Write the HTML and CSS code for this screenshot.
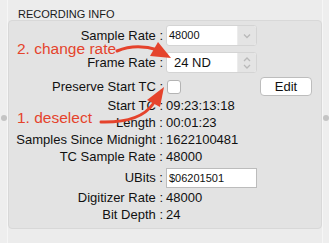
FILE: index.html
```html
<!DOCTYPE html>
<html lang="en">
<head>
  <meta charset="UTF-8">
  <title>Recording Info</title>
  <link rel="stylesheet" href="styles.css">
</head>
<body>

<div class="app">
  <div class="strip strip-left"><span class="grip"></span></div>

  <div class="main">
    <div class="group-title">RECORDING INFO</div>
    <div class="group">
      <div class="form">
        <div class="label row-select">Sample Rate :</div>
        <div class="value row-select">
          <div class="combo">
            <span class="combo-text small">48000</span>
            <span class="combo-btn">
              <svg width="10" height="8" viewBox="0 0 10 8"><path d="M2 2.5 L5 5.5 L8 2.5" fill="none" stroke="#b9b9b9" stroke-width="1.3"/></svg>
            </span>
          </div>
        </div>

        <div class="label row-select gap-top">Frame Rate :</div>
        <div class="value row-select gap-top">
          <div class="combo popup">
            <span class="combo-text">24 ND</span>
            <span class="combo-btn">
              <svg width="10" height="16" viewBox="0 0 10 16"><path d="M2 6 L5 3 L8 6 M2 10 L5 13 L8 10" fill="none" stroke="#b9b9b9" stroke-width="1.3"/></svg>
            </span>
          </div>
        </div>

        <div class="label row-check">Preserve Start TC :</div>
        <div class="value row-check">
          <span class="checkbox"></span>
          <button class="btn">Edit</button>
        </div>

        <div class="label">Start TC :</div>
        <div class="value">09:23:13:18</div>
        <div class="label">Length :</div>
        <div class="value">00:01:23</div>
        <div class="label">Samples Since Midnight :</div>
        <div class="value">1622100481</div>
        <div class="label">TC Sample Rate :</div>
        <div class="value">48000</div>

        <div class="label row-field">UBits :</div>
        <div class="value row-field">
          <div class="field">$06201501</div>
        </div>

        <div class="label">Digitizer Rate :</div>
        <div class="value">48000</div>
        <div class="label">Bit Depth :</div>
        <div class="value">24</div>
      </div>
    </div>
  </div>

  <div class="strip strip-right"><span class="grip"></span></div>

  <!-- annotations drawn over the form -->
  <div class="note note-rate">2. change rate</div>
  <div class="note note-deselect">1. deselect</div>
  <svg class="arrows" width="329" height="243" viewBox="0 0 329 243">
    <path d="M117 51 Q136 43 158 50" fill="none" stroke="#e5432c" stroke-width="3" stroke-linecap="round"/>
    <path d="M171 58 L150 56 L158 42 Z" fill="#e5432c"/>
    <path d="M101 122 Q140 123 153 104" fill="none" stroke="#e5432c" stroke-width="3" stroke-linecap="round"/>
    <path d="M164 87 L147 100 L160 107 Z" fill="#e5432c"/>
  </svg>
</div>

</body>
</html>
```

FILE: styles.css
```css
body {
  margin: 0;
  background: #ececec;
  font-family: "Liberation Sans", Arial, sans-serif;
  font-size: 13px;
  color: #111;
}
.app {
  position: relative;
  display: flex;
  height: 243px;
  overflow: hidden;
}
.strip {
  display: flex;
  align-items: center;
  justify-content: center;
  padding-bottom: 8px;
  background: #eeeeee;
}
.strip-left {
  width: 7px;
  border-right: 1px solid #f6f6f6;
}
.strip-right {
  width: 6px;
  border-left: 1px solid #f6f6f6;
}
.grip {
  width: 6px;
  height: 6px;
  border-radius: 50%;
  background: #c4c4c4;
}
.main {
  flex: 1;
  padding-top: 8px;
}
.group-title {
  font-size: 11px;
  line-height: 12px;
  padding-left: 10px;
  color: #1a1a1a;
}
.group {
  height: 206px;
  background: #e3e3e3;
  border: 1px solid #d8d8d8;
  border-radius: 4px;
  padding-top: 4px;
  box-sizing: border-box;
  height: 209px;
}
.form {
  display: grid;
  grid-template-columns: 154px 1fr;
  column-gap: 3px;
}
.label {
  text-align: right;
  line-height: 17px;
  white-space: nowrap;
}
.value {
  line-height: 17px;
}
.row-select {
  height: 21px;
  line-height: 21px;
}
.gap-top {
  margin-top: 6px;
}
.row-check {
  display: flex;
  align-items: center;
  height: 19px;
  margin-top: 4px;
  margin-bottom: 1px;
  line-height: 19px;
  justify-content: flex-end;
}
.value.row-check {
  justify-content: flex-start;
  padding-right: 9px;
}
.row-field {
  height: 20px;
  line-height: 20px;
  margin-top: 3px;
  margin-bottom: 1px;
}
.combo {
  display: flex;
  width: 91px;
  height: 21px;
  box-sizing: border-box;
  background: #fff;
  border: 1px solid #d4d4d4;
  border-radius: 3px;
  overflow: hidden;
}
.combo-text {
  flex: 1;
  padding-left: 2px;
  line-height: 19px;
}
.combo-text.small {
  font-size: 11px;
}
.popup .combo-text {
  padding-left: 7px;
}
.combo-btn {
  width: 18px;
  display: flex;
  align-items: center;
  justify-content: center;
  background: #e4e4e4;
  border-left: 1px solid #ececec;
}
.checkbox {
  width: 12px;
  height: 12px;
  margin-left: 1px;
  background: #fff;
  border: 1px solid #b4b4b4;
  border-radius: 3px;
}
.btn {
  margin-left: auto;
  width: 52px;
  height: 19px;
  padding: 0;
  background: #fff;
  border: 1px solid #bdbdbd;
  border-radius: 4px;
  font-family: inherit;
  font-size: 13px;
  color: #111;
}
.field {
  width: 91px;
  height: 20px;
  box-sizing: border-box;
  background: #fff;
  border: 1px solid #bcbcbc;
  padding-left: 2px;
  font-size: 11px;
  line-height: 18px;
}
.note {
  position: absolute;
  left: 17px;
  color: #e5432c;
  font-size: 15.5px;
  line-height: 16px;
  white-space: nowrap;
}
.note-rate {
  top: 41px;
}
.note-deselect {
  top: 110px;
}
.arrows {
  position: absolute;
  left: 0;
  top: 0;
  pointer-events: none;
}
```
